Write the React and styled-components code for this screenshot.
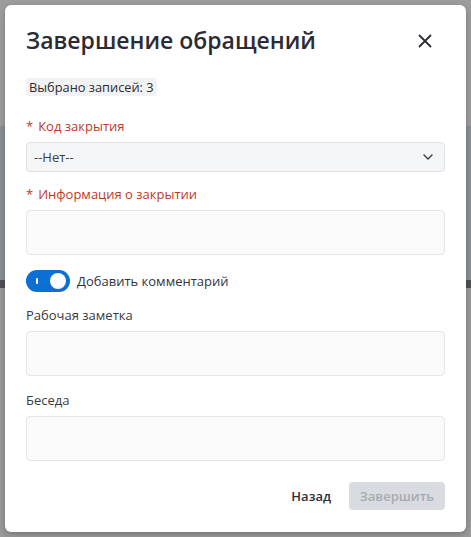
import React from "react";
import styled, { createGlobalStyle } from "styled-components";

const Global = createGlobalStyle`
  html, body { margin: 0; padding: 0; }
  body {
    font-family: "Open Sans", "Noto Sans", sans-serif;
    background: linear-gradient(
      to bottom,
      #9d9d9d 0px,
      #9d9d9d 126px,
      #8b8f97 126px,
      #8b8f97 280px,
      #4f5054 280px,
      #4f5054 288px,
      #9a9a9a 288px
    );
    min-height: 537px;
  }
  * { box-sizing: border-box; }
`;

const Page = styled.div`
  padding: 5px;
  height: 537px;
`;

const Modal = styled.div`
  width: 461px;
  height: 527px;
  background: #fff;
  border-radius: 6px;
  box-shadow: 0 2px 6px rgba(0, 0, 0, 0.25);
  padding: 20px 21px 0 21px;
  display: flex;
  flex-direction: column;
`;

const Header = styled.div`
  display: flex;
  align-items: center;
  justify-content: space-between;
  height: 30px;
`;

const Title = styled.h1`
  margin: 0;
  font-size: 23px;
  line-height: 30px;
  font-weight: 600;
  color: #2b2b35;
`;

const Close = styled.button`
  border: 0;
  background: transparent;
  padding: 0;
  width: 20px;
  height: 20px;
  display: flex;
  align-items: center;
  justify-content: center;
  margin-right: 10px;
  margin-top: 2px;
  cursor: pointer;
`;

const Badge = styled.span`
  align-self: flex-start;
  margin-top: 23px;
  height: 18px;
  line-height: 18px;
  padding: 0 3px;
  background: #f1f2f4;
  border-radius: 3px;
  font-size: 12.8px;
  color: #2b2b33;
`;

const Label = styled.div`
  font-size: 13px;
  line-height: 20px;
  font-weight: 500;
  color: ${(p) => (p.$required ? "#bd3a1f" : "#3a3a42")};
  margin-top: ${(p) => p.$mt}px;
  margin-bottom: 6px;
`;

const Star = styled.span`
  margin-right: 5px;
`;

const Select = styled.div`
  height: 30px;
  background: #f4f5f7;
  border: 1px solid #dfe1e5;
  border-radius: 4px;
  display: flex;
  align-items: center;
  justify-content: space-between;
  padding: 0 11px 0 7px;
  font-size: 13px;
  color: #3d3d45;
`;

const TextArea = styled.div`
  height: 45px;
  background: #fafafa;
  border: 1px solid #e4e5e8;
  border-radius: 4px;
`;

const ToggleRow = styled.div`
  display: flex;
  align-items: center;
  gap: 7px;
  margin-top: 15px;
`;

const Toggle = styled.div`
  position: relative;
  width: 44px;
  height: 22px;
  border-radius: 11px;
  background: #0b6fd4;
  flex: none;
`;

const Knob = styled.span`
  position: absolute;
  right: 4px;
  top: 3px;
  width: 16px;
  height: 16px;
  border-radius: 50%;
  background: #fff;
`;

const Tick = styled.span`
  position: absolute;
  left: 10px;
  top: 8px;
  width: 2px;
  height: 6px;
  background: #fff;
  border-radius: 1px;
`;

const ToggleText = styled.span`
  font-size: 13px;
  font-weight: 500;
  color: #33333b;
`;

const Footer = styled.div`
  display: flex;
  justify-content: flex-end;
  align-items: center;
  gap: 18px;
  margin-top: 21px;
`;

const BackButton = styled.button`
  border: 0;
  background: transparent;
  font-family: inherit;
  font-size: 13px;
  font-weight: 600;
  color: #2f2f37;
  padding: 0;
  cursor: pointer;
`;

const PrimaryButton = styled.button`
  width: 96px;
  height: 28px;
  border: 0;
  border-radius: 4px;
  background: #d8dbe0;
  color: #a6abb3;
  font-family: inherit;
  font-size: 13px;
  font-weight: 600;
`;

export default function App() {
  return (
    <>
      <Global />
      <Page>
        <Modal>
          <Header>
            <Title>Завершение обращений</Title>
            <Close aria-label="Закрыть">
              <svg width="14" height="14" viewBox="0 0 14 14">
                <path d="M1.5 1.5 L12.5 12.5 M12.5 1.5 L1.5 12.5" stroke="#2b2b35" strokeWidth="1.8" strokeLinecap="round" />
              </svg>
            </Close>
          </Header>
          <Badge>Выбрано записей: 3</Badge>

          <Label $required $mt={20}>
            <Star>*</Star>Код закрытия
          </Label>
          <Select>
            <span>--Нет--</span>
            <svg width="10" height="6" viewBox="0 0 10 6">
              <path d="M1 1 L5 5 L9 1" fill="none" stroke="#3a3a42" strokeWidth="1.4" strokeLinecap="round" strokeLinejoin="round" />
            </svg>
          </Select>

          <Label $required $mt={12}>
            <Star>*</Star>Информация о закрытии
          </Label>
          <TextArea />

          <ToggleRow>
            <Toggle>
              <Tick />
              <Knob />
            </Toggle>
            <ToggleText>Добавить комментарий</ToggleText>
          </ToggleRow>

          <Label $mt={13}>Рабочая заметка</Label>
          <TextArea />

          <Label $mt={14}>Беседа</Label>
          <TextArea />

          <Footer>
            <BackButton>Назад</BackButton>
            <PrimaryButton disabled>Завершить</PrimaryButton>
          </Footer>
        </Modal>
      </Page>
    </>
  );
}
